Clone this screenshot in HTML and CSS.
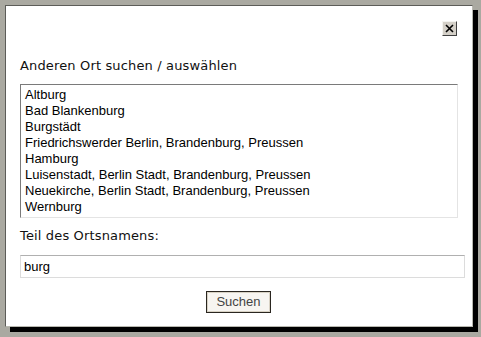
FILE: index.html
```html
<!DOCTYPE html>
<html>
<head>
    <meta charset="UTF-8">
    <title>Ort suchen</title>
    <link rel="stylesheet" href="styles.css">
</head>
<body>

<div class="overlay">
    <div class="dialog">
        <div class="closeRow">
            <div class="closeBtn">
                <svg width="13" height="13" viewBox="0 0 13 13">
                    <path d="M3 3 L10 10 M10 3 L3 10" stroke="#000" stroke-width="1.6" fill="none"/>
                </svg>
            </div>
        </div>
        <h2 class="caption">Anderen Ort suchen / auswählen</h2>
        <div class="placeList">
            <div class="place">Altburg</div>
            <div class="place">Bad Blankenburg</div>
            <div class="place">Burgstädt</div>
            <div class="place">Friedrichswerder Berlin, Brandenburg, Preussen</div>
            <div class="place">Hamburg</div>
            <div class="place">Luisenstadt, Berlin Stadt, Brandenburg, Preussen</div>
            <div class="place">Neuekirche, Berlin Stadt, Brandenburg, Preussen</div>
            <div class="place">Wernburg</div>
        </div>
        <p class="caption label">Teil des Ortsnamens:</p>
        <input class="field" type="text" value="burg" spellcheck="false" autocomplete="off">
        <div class="btnRow">
            <div class="btn">Suchen</div>
        </div>
    </div>
</div>

</body>
</html>
```

FILE: styles.css
```css
body {
    margin: 0;
    background: #aaa9a1;
    font-family: "Liberation Sans", Arial, sans-serif;
    color: black;
}

.overlay {
    padding: 5px;
}

.dialog {
    box-sizing: border-box;
    width: 468px;
    height: 322px;
    background: white;
    border: 1px solid #5c5c58;
    border-right-color: #b8b8b0;
    border-bottom-color: #b8b8b0;
    box-shadow: 5px 5px 0 #000;
    padding: 15px 15px 0 14px;
    display: flex;
    flex-direction: column;
}

.closeRow {
    display: flex;
    justify-content: flex-end;
}

.closeBtn {
    box-sizing: border-box;
    width: 15px;
    height: 15px;
    background: #d4d0c8;
    border: 1px solid;
    border-color: #f4f4f0 #404040 #404040 #f4f4f0;
}

.closeBtn svg {
    display: block;
}

.caption {
    font-family: "DejaVu Sans", Verdana, sans-serif;
    font-size: 13px;
    font-weight: normal;
    line-height: 16px;
    letter-spacing: 0.15px;
    margin: 22px 0 10px 0;
    color: #111;
}

.label {
    margin: 10px 0 11px 0;
}

.placeList {
    box-sizing: border-box;
    width: 438px;
    height: 134px;
    padding: 2px 4px;
    border: 1px solid;
    border-color: #7a7a7a #e4e4e4 #e4e4e4 #7a7a7a;
    font-size: 13px;
    line-height: 16px;
}

.field {
    box-sizing: border-box;
    width: 445px;
    height: 23px;
    margin: 0;
    padding: 0 3px;
    border: 1px solid #dcdcdc;
    border-top-color: #b0b0b0;
    font-family: "Liberation Sans", Arial, sans-serif;
    font-size: 13px;
    color: black;
    outline: none;
}

.btnRow {
    display: flex;
    justify-content: center;
    margin-top: 13px;
}

.btn {
    box-sizing: border-box;
    width: 65px;
    height: 22px;
    background: #f7f5f1;
    border: 1px solid #2a2620;
    box-shadow: inset 0 0 0 1px #d8d2c4;
    font-size: 13px;
    line-height: 20px;
    text-align: center;
    color: #444;
}
```
